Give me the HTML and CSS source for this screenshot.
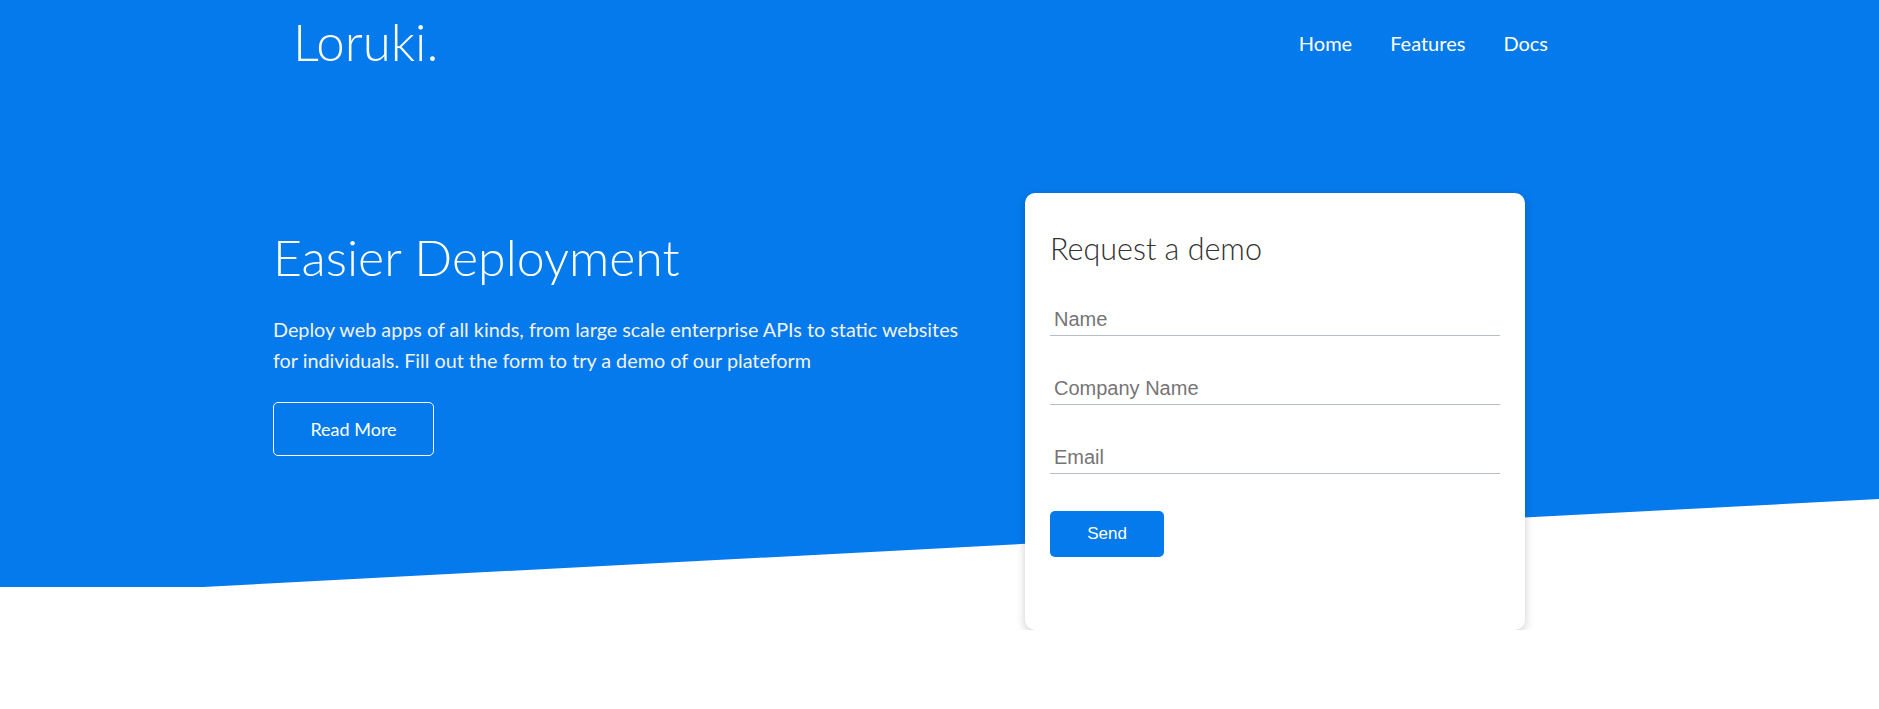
FILE: index.html
```html
<!DOCTYPE html>
<html lang="en">
<head>
<meta charset="UTF-8">
<title>Loruki</title>
<link rel="stylesheet" href="styles.css">
</head>
<body>
<div class="hero">
  <header class="navbar">
    <h1 class="logo">Loruki.</h1>
    <nav>
      <ul class="nav-list">
        <li><a href="#">Home</a></li>
        <li><a href="#">Features</a></li>
        <li><a href="#">Docs</a></li>
      </ul>
    </nav>
  </header>
  <section class="showcase">
    <div class="showcase-text">
      <h2 class="showcase-title">Easier Deployment</h2>
      <p class="lead">Deploy web apps of all kinds, from large scale enterprise APIs to static websites for individuals. Fill out the form to try a demo of our plateform</p>
      <a href="#" class="btn-outline">Read More</a>
    </div>
    <div class="card">
      <h2 class="card-title">Request a demo</h2>
      <form class="demo-form">
        <input type="text" class="field" placeholder="Name">
        <input type="text" class="field" placeholder="Company Name">
        <input type="email" class="field" placeholder="Email">
        <button type="button" class="btn">Send</button>
      </form>
    </div>
  </section>
</div>
</body>
</html>
```
FILE: styles.css
```css
* { box-sizing: border-box; }
html, body { margin: 0; padding: 0; }
body {
  font-family: Lato, "Open Sans", sans-serif;
  color: #333;
  background: #fff;
}
.hero {
  position: relative;
  z-index: 0;
}
.hero::before {
  content: "";
  position: absolute;
  left: 0;
  right: 0;
  top: 0;
  height: 587px;
  background: #047aed;
  clip-path: polygon(0 0, 100% 0, 100% 85%, 10.8% 100%, 0 100%);
  z-index: -1;
}
.navbar {
  height: 84px;
  display: flex;
  align-items: center;
  justify-content: space-between;
  padding: 0 331px 0 293px;
  color: #fff;
}
.logo {
  margin: 0;
  font-size: 51px;
  font-weight: 300;
  line-height: 1.2;
}
.nav-list {
  list-style: none;
  margin: 2px 0 0;
  padding: 0;
  display: flex;
  gap: 38px;
}
.nav-list a {
  color: #fff;
  text-decoration: none;
  font-size: 20px;
  line-height: 1.2;
}
.showcase {
  display: grid;
  grid-template-columns: 1fr 500px;
  align-items: start;
  padding: 109px 354px 0 273px;
}
.showcase-text {
  padding-top: 34px;
  max-width: 700px;
  color: #fff;
}
.showcase-title {
  margin: 0;
  font-size: 50px;
  font-weight: 300;
  line-height: 1.2;
}
.lead {
  margin: 27.3px 0 26.4px;
  font-size: 19.8px;
  line-height: 30.6px;
  color: #f2f2f8;
}
.btn-outline {
  display: flex;
  align-items: center;
  justify-content: center;
  width: 161px;
  height: 54px;
  border: 1px solid #fff;
  border-radius: 5px;
  color: #fff;
  text-decoration: none;
  font-size: 18px;
}
.card {
  background: #fff;
  border-radius: 10px;
  box-shadow: 0 3px 10px rgba(0, 0, 0, 0.2);
  padding: 25px;
  height: 437px;
}
.card-title {
  margin: 11.6px 0 0;
  font-size: 30.5px;
  font-weight: 300;
  line-height: 1.2;
  color: #333;
}
.demo-form {
  display: flex;
  flex-direction: column;
  align-items: flex-start;
  margin-top: 38.5px;
}
.field {
  display: block;
  width: 100%;
  border: 0;
  border-bottom: 1px solid #b4becb;
  padding: 3px 4px 4px;
  font-family: "Liberation Sans", Arial, sans-serif;
  font-size: 20px;
  line-height: normal;
  color: #333;
  background: transparent;
  outline: none;
  margin-bottom: 38px;
}
.field::placeholder { color: #757575; }
.demo-form .field:last-of-type { margin-bottom: 37.5px; }
.btn {
  width: 114px;
  height: 46px;
  border: 0;
  border-radius: 5px;
  background: #047aed;
  color: #fff;
  font-family: "Liberation Sans", Arial, sans-serif;
  font-size: 17px;
  cursor: pointer;
}
```
